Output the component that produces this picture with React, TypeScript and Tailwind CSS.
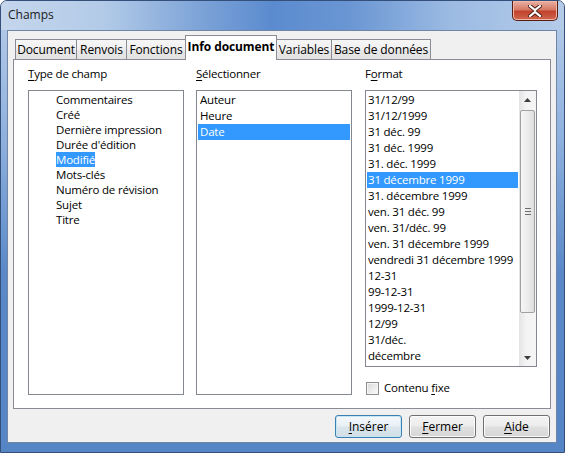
const tabs: [string, number][] = [
  ['Document', 62],
  ['Renvois', 51],
  ['Fonctions', 60],
  ['Info document', 92],
  ['Variables', 56],
  ['Base de données', 100],
];

const typeItems = [
  'Commentaires',
  'Créé',
  'Dernière impression',
  "Durée d'édition",
  'Modifié',
  'Mots-clés',
  'Numéro de révision',
  'Sujet',
  'Titre',
];

const selectItems = ['Auteur', 'Heure', 'Date'];

const formatItems = [
  '31/12/99',
  '31/12/1999',
  '31 déc. 99',
  '31 déc. 1999',
  '31. déc. 1999',
  '31 décembre 1999',
  '31. décembre 1999',
  'ven. 31 déc. 99',
  'ven. 31/déc. 99',
  'ven. 31 décembre 1999',
  'vendredi 31 décembre 1999',
  '12-31',
  '99-12-31',
  '1999-12-31',
  '12/99',
  '31/déc.',
  'décembre',
];

const U = ({ c }: { c: string }) => <span className="underline underline-offset-2 decoration-1">{c}</span>;

const Button = ({ acc, rest, def }: { acc: string; rest: string; def?: boolean }) => (
  <button
    className={
      'h-[23px] w-[67px] rounded-[3px] border text-[12px] leading-[16px] text-black ' +
      (def
        ? 'border-[#3c7fb1] bg-[linear-gradient(180deg,#f4f8fb_0%,#e9f0f5_48%,#dae5ec_52%,#d2dee6_100%)] shadow-[inset_0_0_0_1px_#c6e6f6]'
        : 'border-[#707070] bg-[linear-gradient(180deg,#f4f4f4_0%,#ececec_48%,#e0e0e0_52%,#d6d6d6_100%)] shadow-[inset_0_0_0_1px_#fbfbfb]')
    }
  >
    <U c={acc} />
    {rest}
  </button>
);

const Arrow = ({ up }: { up?: boolean }) => (
  <div className="flex h-[17px] items-center justify-center">
    <svg width="7" height="4" viewBox="0 0 7 4">
      <path d={up ? 'M0 4 L3.5 0 L7 4 Z' : 'M0 0 L3.5 4 L7 0 Z'} fill="#3b3b3b" />
    </svg>
  </div>
);

export default function App() {
  return (
    <div className="flex h-[453px] w-[565px] flex-col overflow-hidden rounded-t-[7px] border border-[#34507a] bg-[linear-gradient(180deg,#b8cde9_0%,#8fb1de_30%,#5b89c8_60%,#5685c6_100%)] font-['Open_Sans',sans-serif] text-black">
      {/* title bar */}
      <div className="flex h-[29px] shrink-0 items-start bg-[linear-gradient(90deg,#c4d6ec_0%,#b3cbe8_18%,#7ea4d8_35%,#5b8bcf_48%,#6a96d3_62%,#9cbbe3_80%,#b4cbe8_100%)]">
        <div className="pl-[7px] pt-[6px] text-[12px] leading-[16px] text-[#1b1b1b]">Champs</div>
        <div className="ml-auto mr-[6px] flex h-[20px] w-[46px] items-center justify-center rounded-b-[5px] border border-t-0 border-[#5a1c12] bg-[linear-gradient(180deg,#eab1a4_0%,#d77a66_45%,#c2432d_55%,#d0664f_100%)] shadow-[inset_0_0_0_1px_#f0b8a8]">
          <svg width="14" height="12" viewBox="0 0 14 12">
            <path d="M2 1 L7 5 L12 1 M2 11 L7 7 L12 11" stroke="#4a1a12" strokeWidth="4" fill="none" strokeLinecap="square" />
            <path d="M2 1 L7 5 L12 1 M2 11 L7 7 L12 11" stroke="#ffffff" strokeWidth="2.2" fill="none" strokeLinecap="square" />
          </svg>
        </div>
      </div>

      {/* client area */}
      <div className="flex flex-1 px-[6px] pb-[9px] pr-[7px]">
        <div className="flex flex-1 flex-col border border-[#6f86a6] bg-[#f0f0f0] pl-[5px] pt-[4px]">
          {/* tabs */}
          <div className="flex h-[24px] items-end pl-[2px]">
            {tabs.map(([label, w], i) => {
              const sel = label === 'Info document';
              return (
                <div
                  key={label}
                  style={{ width: w }}
                  className={
                    'relative flex items-center justify-center border border-b-0 border-[#898c95] text-[12px] tracking-[-0.1px] ' +
                    (i > 0 ? '-ml-px ' : '') +
                    (sel
                      ? 'z-10 -mb-px h-[25px] bg-white pb-[2px] font-bold'
                      : 'h-[20px] bg-[linear-gradient(180deg,#f6f6f6_0%,#efefef_50%,#e7e7e7_51%,#e2e2e2_100%)]')
                  }
                >
                  {label}
                </div>
              );
            })}
          </div>

          {/* panel */}
          <div className="flex h-[350px] w-[538px] gap-[12px] border border-[#898c95] bg-white pl-[14px] pt-[6px] text-[11.5px] leading-[16px] tracking-[-0.2px]">
            <div className="flex w-[156px] flex-col">
              <div className="h-[16px]">
                <U c="T" />ype de champ
              </div>
              <div className="mt-[8px] h-[305px] border border-[#828790] pl-[27px] pt-[1px]">
                {typeItems.map((t) => (
                  <div key={t} className="h-[15px] leading-[15px]">
                    {t === 'Modifié' ? (
                      <span className="inline-block bg-[#3399ff] text-white">{t}</span>
                    ) : (
                      t
                    )}
                  </div>
                ))}
              </div>
            </div>

            <div className="flex w-[156px] flex-col">
              <div className="h-[16px]">
                <U c="S" />électionner
              </div>
              <div className="mt-[8px] h-[305px] border border-[#828790] p-[1px]">
                {selectItems.map((t) => (
                  <div
                    key={t}
                    className={'h-[16px] pl-[2px] leading-[16px] ' + (t === 'Date' ? 'bg-[#3399ff] text-white' : '')}
                  >
                    {t}
                  </div>
                ))}
              </div>
            </div>

            <div className="ml-px flex w-[172px] flex-col">
              <div className="h-[16px]">
                F<U c="o" />rmat
              </div>
              <div className="mt-[8px] flex h-[277px] border border-[#828790]">
                <div className="min-w-0 flex-1 overflow-hidden p-[1px]">
                  {formatItems.map((t) => (
                    <div
                      key={t}
                      className={
                        'h-[16px] pl-[1px] leading-[16px] whitespace-nowrap ' +
                        (t === '31 décembre 1999' ? 'bg-[#3399ff] text-white' : '')
                      }
                    >
                      {t}
                    </div>
                  ))}
                </div>
                <div className="flex w-[17px] flex-col bg-[linear-gradient(90deg,#e3e3e3_0%,#f3f3f3_40%,#f5f5f5_100%)]">
                  <Arrow up />
                  <div className="flex-1 px-[1px] pt-[2px]">
                    <div className="flex h-[203px] flex-col items-center justify-center gap-[2px] rounded-[2px] border border-[#a0a0a0] bg-[linear-gradient(90deg,#f6f6f6_0%,#ececec_50%,#dedede_100%)]">
                      <div className="h-px w-[6px] bg-[#6f6f6f]" />
                      <div className="h-px w-[6px] bg-[#6f6f6f]" />
                      <div className="h-px w-[6px] bg-[#6f6f6f]" />
                    </div>
                  </div>
                  <Arrow />
                </div>
              </div>
              <div className="ml-px mt-[13px] flex items-center gap-[5px]">
                <div className="h-[13px] w-[13px] border border-[#8f8f8f] bg-[linear-gradient(135deg,#d8d8d8_0%,#eeeeee_60%,#fbfbfb_100%)] shadow-[inset_0_0_0_1px_#f4f4f4]" />
                <span>
                  Contenu <U c="f" />ixe
                </span>
              </div>
            </div>
          </div>

          {/* buttons */}
          <div className="mt-[6px] flex w-[538px] justify-end gap-[7px] pr-[1px]">
            <Button acc="I" rest="nsérer" def />
            <Button acc="F" rest="ermer" />
            <Button acc="A" rest="ide" />
          </div>
        </div>
      </div>
    </div>
  );
}
